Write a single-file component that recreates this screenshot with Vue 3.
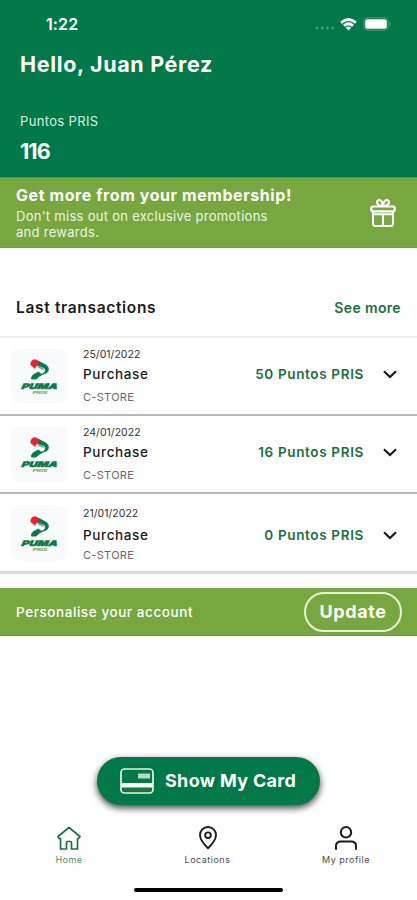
<script setup>
const transactions = [
  { date: '25/01/2022', type: 'Purchase', place: 'C-STORE', points: '50 Puntos PRIS' },
  { date: '24/01/2022', type: 'Purchase', place: 'C-STORE', points: '16 Puntos PRIS' },
  { date: '21/01/2022', type: 'Purchase', place: 'C-STORE', points: '0 Puntos PRIS' },
]
</script>

<template>
  <div class="screen">
    <header class="header">
      <div class="status">
        <span class="time">1:22</span>
        <div class="status-icons">
          <svg class="dots" width="20" height="4" viewBox="0 0 20 4"><g fill="#4f9d79"><circle cx="2" cy="2" r="1.4" /><circle cx="7.2" cy="2" r="1.4" /><circle cx="12.4" cy="2" r="1.4" /><circle cx="17.6" cy="2" r="1.4" /></g></svg>
          <svg class="wifi" width="17" height="13" viewBox="0 0 17 13" fill="none" stroke="#fff" stroke-width="2.7"><path d="M1 4.7Q8.5-1.7 16 4.7" /><path d="M3.9 7.7Q8.5 3.8 13.1 7.7" /><path d="M5.8 9.5Q8.5 7.4 11.2 9.5L8.5 12.6Z" fill="#fff" stroke="none" /></svg>
          <svg class="battery" width="28" height="14" viewBox="0 0 28 14"><rect x=".7" y=".7" width="24.6" height="12.6" rx="4" fill="none" stroke="#3f9570" stroke-width="1.2" /><rect x="2.2" y="2.2" width="21.6" height="9.6" rx="2" fill="#fff" /><path d="M26.6 5q1.6 2 0 4z" fill="#84b99f" /></svg>
        </div>
      </div>
      <h1 class="hello">Hello, Juan Pérez</h1>
      <div class="points-label">Puntos PRIS</div>
      <div class="points-total">116</div>
    </header>

    <section class="promo">
      <div>
        <h2 class="promo-title">Get more from your membership!</h2>
        <p class="promo-text">Don't miss out on exclusive promotions<br />and rewards.</p>
      </div>
      <svg class="gift" width="26" height="30" viewBox="0 0 26 30" fill="none" stroke="#fff" stroke-width="2.2" stroke-linejoin="round" stroke-linecap="round">
        <rect x="1.3" y="8.5" width="23.4" height="4.8" rx="1.5" />
        <path d="M3 14v11.5q0 2.5 2.5 2.5h15q2.500 0 2.500-2.500V14M13 16.500v11.500M3 16.200h20" stroke-width="2" />
        <path d="M13 8C9.500 8 6.300 6.500 7.200 3.200C8.500.500 12.500 2 13 8C13.500 2 17.500.500 18.800 3.200C19.700 6.500 16.500 8 13 8Z" />
      </svg>
    </section>

    <section class="history">
      <div class="history-head">
        <h2 class="history-title">Last transactions</h2>
        <a class="more">See more</a>
      </div>
      <article v-for="item in transactions" :key="item.date" class="row">
        <div class="tile">
          <svg width="40" height="42" viewBox="0 0 40 42">
            <path d="M18 5.500Q23 8 26.500 10Q31 14 27 18Q25 19.500 22 19Q26 16.500 25 14Q23 11.500 18 11.500Z" fill="#087a4c" />
            <path d="M18 11.500L23 12.500L25 16L23 14.500L18.500 13Z" fill="#65a78a" />
            <path d="M11.500 6Q13.500 3.200 16.500 4.800L19 6.500L18.500 10.500L16 11.500L15 14L13 12L11 10.500Q9.500 9 11.500 6Z" fill="#ef2027" />
            <path d="M18.500 16.500Q20.500 19.500 25 18.500L19.500 21.500L16 24.500H11.500Q9.500 20.500 18.500 16.500Z" fill="#087a4c" />
            <g transform="skewX(-12)"><text x="8.500" y="34" textLength="36" lengthAdjust="spacingAndGlyphs" class="logo-name">PUMA</text></g>
            <text x="12.500" y="39.200" textLength="15" lengthAdjust="spacingAndGlyphs" class="logo-sub">PRIS</text>
          </svg>
        </div>
        <div class="info">
          <div class="date">{{ item.date }}</div>
          <div class="type">{{ item.type }}</div>
          <div class="place">{{ item.place }}</div>
        </div>
        <div class="points">{{ item.points }}</div>
        <svg class="chevron" width="14" height="9" viewBox="0 0 14 9" fill="none" stroke="#17171b" stroke-width="2.1"><path d="M1 1.200L7 7L13 1.200" /></svg>
      </article>
    </section>

    <section class="account">
      <span class="account-text">Personalise your account</span>
      <button class="update">Update</button>
    </section>

    <button class="card-button">
      <svg width="34" height="26" viewBox="0 0 34 26"><rect x="1" y="1" width="32" height="24" rx="3.500" fill="none" stroke="#e4f2ea" stroke-width="1.700" /><path d="M1 15h32v4.500H1z" fill="#fff" /><path d="M3 20.500h28v2.500H3z" fill="#28723b" /><path d="M18 5.500h12v5H18z" fill="#b6d9c8" /></svg>
      <span class="card-label">Show My Card</span>
    </button>

    <nav class="nav">
      <div class="nav-item active">
        <svg width="26" height="25" viewBox="0 0 26 25" fill="none" stroke="currentColor" stroke-width="1.700" stroke-linejoin="round"><path d="M13 1.500L24 10.500L22.500 12.500H21.500V23H15.500V16.500Q15.500 15.500 14.500 15.500H11.500Q10.500 15.500 10.500 16.500V23H4.500V12.500H3L2 10.500Z" /></svg>
        <span class="label-home">Home</span>
      </div>
      <div class="nav-item">
        <svg width="26" height="25" viewBox="0 0 26 25" fill="none" stroke="currentColor" stroke-width="1.900" stroke-linejoin="round"><path d="M13 22.200Q5 14.500 5 9A8 8 0 0 1 21 9Q21 14.500 13 22.200Z" /><circle cx="13" cy="9.200" r="2.800" /></svg>
        <span class="label-loc">Locations</span>
      </div>
      <div class="nav-item">
        <svg width="26" height="25" viewBox="0 0 26 25" fill="none" stroke="currentColor" stroke-width="2"><circle cx="13" cy="6.300" r="5.200" /><path d="M3 23.800V20Q3 15.500 8 15.500H18Q23 15.500 23 20V23.800" /></svg>
        <span class="label-profile">My profile</span>
      </div>
    </nav>
    <div class="home-bar"></div>
  </div>
</template>

<style>
body { margin: 0; background: #fff; }
</style>

<style scoped>
.screen { width: 417px; height: 900px; display: flex; flex-direction: column; overflow: hidden; background: #fff; color: #1b1b20; font-family: Inter, "Liberation Sans", sans-serif; white-space: nowrap; }
h1, h2, p { margin: 0; }
button { font-family: inherit; padding: 0; }
svg { display: block; flex: none; }
.header { box-sizing: border-box; height: 177px; flex: none; padding: 14px 20px 0; background: #007848; color: #fff; }
.status { height: 20px; display: flex; justify-content: space-between; padding: 0 6px 0 26px; line-height: 20px; }
.time { font-size: 16px; font-weight: 600; letter-spacing: .1px; }
.status-icons { display: flex; align-items: center; }
.dots { margin: 8px 5px 0 0; }
.wifi { margin-right: 6px; }
.hello { margin-top: 16px; font-size: 21.500px; line-height: 28px; font-weight: 700; letter-spacing: .66px; }
.points-label { margin-top: 34px; font-size: 13px; line-height: 18px; letter-spacing: .35px; color: #dfefe7; }
.points-total { margin-top: 9px; font-size: 21.500px; line-height: 24px; font-weight: 700; letter-spacing: -.9px; }
.promo { box-sizing: border-box; height: 71px; flex: none; display: flex; justify-content: space-between; align-items: flex-start; padding: 7px 21px 0 16px; background: #76a83f; border-bottom: 1px solid #6ba128; border-top: 1px solid #5c9c40; color: #fff; }
.promo-title { font-size: 16px; line-height: 20px; font-weight: 700; letter-spacing: .57px; }
.promo-text { margin-top: 3px; font-size: 13px; line-height: 16px; letter-spacing: .28px; color: #edf4e3; }
.gift { margin-top: 13px; }
.history { margin-top: 48px; }
.history-head { box-sizing: border-box; height: 42px; display: flex; justify-content: space-between; padding: 2px 16px 0 16px; line-height: 20px; border-bottom: 2px solid #ececec; }
.history-title { font-size: 15.500px; font-weight: 600; letter-spacing: .67px; }
.more { font-size: 14px; font-weight: 600; letter-spacing: .35px; color: #18713d; }
.row { box-sizing: border-box; height: 78px; display: flex; align-items: center; padding: 0 20px 2px 11px; border-bottom: 2px solid #b9b9b9; }
.row:last-child { height: 80px; border-bottom: 3px solid #dadada; }
.tile { width: 57px; height: 56px; margin-top: 1px; border-radius: 9px; background: #f8fafb; display: flex; align-items: center; justify-content: center; }
.row:last-child .tile { margin-top: 3px; }
.logo-name { font: italic 900 7.500px Inter, sans-serif; fill: #087a4c; stroke: #087a4c; stroke-width: .5px; }
.logo-sub { font: italic 800 4px Inter, sans-serif; fill: #8cac38; }
.info { margin-left: 15px; flex: 1; padding-top: 2px; }
.date { font-size: 10.500px; line-height: 14px; letter-spacing: .03px; color: #303033; }
.type { margin-top: 3px; font-size: 13.500px; line-height: 18px; font-weight: 500; letter-spacing: .63px; }
.place { margin-top: 8px; font-size: 11px; line-height: 13px; letter-spacing: .3px; color: #68686b; }
.row:last-child .info { padding-top: 6px; }
.row:last-child .type { margin-top: 5px; }
.row:last-child .place { margin-top: 5px; }
.points { margin-bottom: 2px; font-size: 13.500px; line-height: 18px; font-weight: 600; letter-spacing: .65px; color: #18713d; }
.chevron { margin: 0 0 2px 19px; }
.row:last-child .points { margin: 6px 0 0; }
.row:last-child .chevron { margin: 7px 0 0 19px; }
.account { box-sizing: border-box; height: 48px; flex: none; margin-top: 14px; display: flex; align-items: center; justify-content: space-between; padding: 0 15px 0 16px; background: #76a83f; border-bottom: 1px solid #6ba128; color: #fff; }
.account-text { font-size: 13.500px; font-weight: 500; letter-spacing: .57px; }
.update { width: 98px; height: 40px; border: 2px solid #e6f1d8; border-radius: 20px; background: transparent; color: #fff; font-size: 18px; font-weight: 700; letter-spacing: .6px; }
.card-button { align-self: center; margin-top: 121px; width: 223px; height: 48px; flex: none; display: flex; align-items: center; padding-left: 23px; gap: 11px; border: 0; border-radius: 24px; background: #007848; color: #fff; box-shadow: 0 3px 7px rgba(0, 0, 0, .75); }
.card-label { padding-bottom: 2px; font-size: 18px; font-weight: 700; letter-spacing: .32px; }
.nav { margin-top: 21px; padding: 0 2px 0 0; display: flex; justify-content: space-between; }
.nav-item { width: 138px; display: flex; flex-direction: column; align-items: center; }
.nav-item span { margin-top: 3px; font-size: 9px; line-height: 12px; letter-spacing: .5px; color: #4a4a4d; }
.active { color: #147442; }
.nav-item.active span { color: #4c9169; }
.home-bar { align-self: center; width: 149px; height: 4px; margin-top: 22px; border-radius: 2px; background: #050505; }
</style>
